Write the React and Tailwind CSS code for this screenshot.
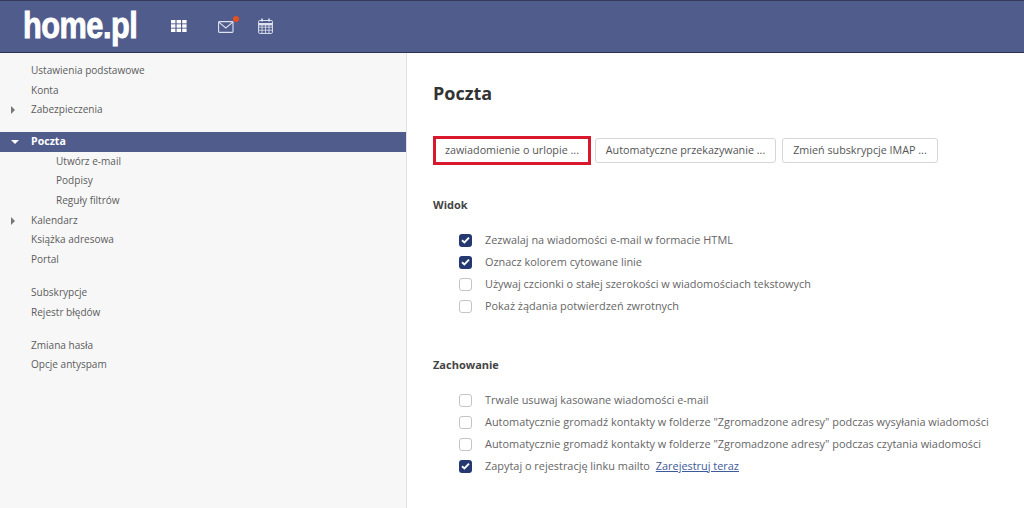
import React from 'react';

const Caret = ({ open }) =>
  open ? (
    <span className="absolute left-[11px] top-[8px] w-0 h-0 border-l-[4px] border-r-[4px] border-t-[4px] border-l-transparent border-r-transparent border-t-white" />
  ) : (
    <span className="absolute left-[11px] top-[6px] w-0 h-0 border-t-[4px] border-b-[4px] border-l-[4px] border-t-transparent border-b-transparent border-l-[#777]" />
  );

const NavItem = ({ label, caret, sub }) => (
  <div className={`relative h-[19.6px] leading-[19px] ${sub ? 'pl-[56px]' : 'pl-[31px]'}`}>
    {caret && <Caret />}
    {label}
  </div>
);

const Check = ({ checked, children }) => (
  <div className="flex items-center h-[22px]">
    <span
      className={`w-[13px] h-[13px] rounded-[3px] flex items-center justify-center shrink-0 mr-[13px] ${
        checked ? 'bg-[#24396f]' : 'bg-white border border-[#c4c4c4]'
      }`}
    >
      {checked && (
        <svg width="9" height="8" viewBox="0 0 9 8" fill="none">
          <path d="M1 4.2 L3.4 6.4 L8 1.6" stroke="white" strokeWidth="1.9" />
        </svg>
      )}
    </span>
    <span>{children}</span>
  </div>
);

const Btn = ({ children, className }) => (
  <div className={`h-[25px] flex items-center justify-center bg-white border border-[#d6d6d6] rounded-[3px] text-[10.75px] text-[#555] ${className}`}>
    {children}
  </div>
);

export default function App() {
  return (
    <div className="w-[1024px] h-[508px] overflow-hidden bg-white flex flex-col font-['Open_Sans',sans-serif] text-[#666]">
      <header className="h-[53px] shrink-0 bg-[#4f5c8c] border-t border-t-[#333a5c] border-b border-b-[#2c3350] flex items-center">
        <div className="ml-[23px] w-[130px] text-white font-bold text-[37px] tracking-[-0.6px] font-['Liberation_Sans',sans-serif] scale-x-[0.83] origin-left leading-none -mt-[2px] [-webkit-text-stroke:0.9px_white]">
          home.pl
        </div>
        <svg className="ml-[18px] -mt-[1px]" width="16" height="12" viewBox="0 0 16 12" fill="#fff">
          <rect x="0" y="0" width="4.4" height="3.4" /><rect x="5.6" y="0" width="4.4" height="3.4" /><rect x="11.2" y="0" width="4.4" height="3.4" />
          <rect x="0" y="4.3" width="4.4" height="3.4" /><rect x="5.6" y="4.3" width="4.4" height="3.4" /><rect x="11.2" y="4.3" width="4.4" height="3.4" />
          <rect x="0" y="8.6" width="4.4" height="3.4" /><rect x="5.6" y="8.6" width="4.4" height="3.4" /><rect x="11.2" y="8.6" width="4.4" height="3.4" />
        </svg>
        <div className="relative ml-[31px]">
          <svg className="block" width="16" height="12" viewBox="0 0 16 12" fill="none" stroke="#dfe3f0" strokeWidth="1.1">
            <rect x="0.6" y="0.6" width="14.4" height="10.8" rx="0.8" />
            <path d="M0.8 1.2 L7.8 7 L14.8 1.2" />
          </svg>
          <span className="absolute -top-[5px] left-[15px] w-[6px] h-[6px] rounded-full bg-[#e8501f]" />
        </div>
        <svg className="ml-[24px] -mt-[1px]" width="15" height="16" viewBox="0 0 15 16" fill="none" stroke="#dfe3f0">
          <rect x="0.6" y="2.5" width="13.8" height="12.9" rx="1" />
          <path d="M0.6 6.2 H14.4" strokeWidth="2.4" />
          <path d="M4 0.5 V3.5 M11 0.5 V3.5" strokeWidth="1.6" />
          <path d="M0.6 9.2 H14.4 M0.6 12.2 H14.4 M4 7 V15 M7.5 7 V15 M11 7 V15" strokeWidth="0.8" />
        </svg>
      </header>

      <div className="flex flex-1 min-h-0">
        <aside className="w-[407px] shrink-0 bg-[#f7f7f7] border-r border-r-[#e2e2e2] pt-[8px] text-[10.05px] text-[#5c5c5c]">
          <NavItem label="Ustawienia podstawowe" />
          <NavItem label="Konta" />
          <NavItem label="Zabezpieczenia" caret />
          <div className="relative mt-[12px] h-[20px] leading-[19px] bg-[#4f5c8c] pl-[31px] text-white font-bold text-[10.6px]">
            <Caret open />
            Poczta
          </div>
          <NavItem label="Utwórz e-mail" sub />
          <NavItem label="Podpisy" sub />
          <NavItem label="Reguły filtrów" sub />
          <NavItem label="Kalendarz" caret />
          <NavItem label="Książka adresowa" />
          <NavItem label="Portal" />
          <div className="h-[14px]" />
          <NavItem label="Subskrypcje" />
          <NavItem label="Rejestr błędów" />
          <div className="h-[13px]" />
          <NavItem label="Zmiana hasła" />
          <NavItem label="Opcje antyspam" />
        </aside>

        <main className="flex-1 pl-[26px] pt-[27px]">
          <h1 className="text-[18px] leading-[26px] font-bold text-[#333]">Poczta</h1>
          <div className="flex items-center mt-[30px]">
            <div className="w-[158px] h-[29px] border-[3px] border-[#d9182d] flex items-center justify-center text-[10.75px] text-[#555] bg-white">
              zawiadomienie o urlopie ...
            </div>
            <Btn className="ml-[4px] w-[181px]">Automatyczne przekazywanie ...</Btn>
            <Btn className="ml-[6px] w-[156px]">Zmień subskrypcje IMAP ...</Btn>
          </div>

          <h2 className="mt-[32px] text-[11px] leading-[16px] font-bold text-[#444]">Widok</h2>
          <div className="mt-[16px] ml-[26px] text-[10.92px]">
            <Check checked>Zezwalaj na wiadomości e-mail w formacie HTML</Check>
            <Check checked>Oznacz kolorem cytowane linie</Check>
            <Check>Używaj czcionki o stałej szerokości w wiadomościach tekstowych</Check>
            <Check>Pokaż żądania potwierdzeń zwrotnych</Check>
          </div>

          <h2 className="mt-[40px] text-[11px] leading-[16px] font-bold text-[#444]">Zachowanie</h2>
          <div className="mt-[16px] ml-[26px] text-[10.92px]">
            <Check>Trwale usuwaj kasowane wiadomości e-mail</Check>
            <Check>Automatycznie gromadź kontakty w folderze "Zgromadzone adresy" podczas wysyłania wiadomości</Check>
            <Check>Automatycznie gromadź kontakty w folderze "Zgromadzone adresy" podczas czytania wiadomości</Check>
            <Check checked>
              Zapytaj o rejestrację linku mailto{' '}
              <a className="ml-[3px] text-[#3d5a99] underline">Zarejestruj teraz</a>
            </Check>
          </div>
        </main>
      </div>
    </div>
  );
}
